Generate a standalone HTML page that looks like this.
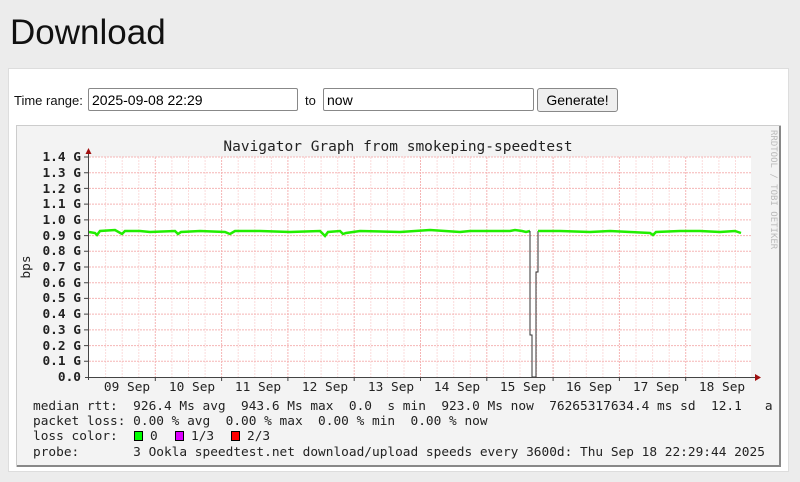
<!DOCTYPE html>
<html><head><meta charset="utf-8"><style>
body{margin:0;background:#ececec;width:800px;height:482px;overflow:hidden;position:relative;font-family:"Liberation Sans",sans-serif}
h1{position:absolute;left:10px;top:13px;margin:0;font-weight:normal;font-size:35px;color:#111}
.panel{position:absolute;left:8px;top:68px;width:781px;height:404px;background:#fff;border:1px solid #ddd;box-sizing:border-box}
.lbl{position:absolute;font-size:13px;color:#111}
.inp{position:absolute;height:23px;border:1px solid #888;border-radius:2px;box-sizing:border-box;font-size:14px;padding:2px 3px;line-height:18px;background:#fff}
.btn{position:absolute;left:537px;top:88px;width:81px;height:24px;border:1px solid #888;border-radius:3px;background:#efefef;box-sizing:border-box;font-size:14px;text-align:center;line-height:22px}
svg{position:absolute;left:16px;top:125px}
svg text{font-family:"DejaVu Sans Mono","Liberation Mono",monospace;font-size:12.8px;fill:#222}
</style></head><body>
<h1>Download</h1>
<div class="panel"></div>
<div class="lbl" style="left:14px;top:93px">Time range:</div>
<div class="inp" style="left:88px;top:88px;width:210px">2025-09-08 22:29</div>
<div class="lbl" style="left:305px;top:93px">to</div>
<div class="inp" style="left:323px;top:88px;width:211px">now</div>
<div class="btn">Generate!</div>
<svg width="765" height="342" viewBox="16 125 765 342">
<rect x="16.5" y="125.5" width="764" height="341" fill="#f3f3f3" stroke="#ccc"/>
<line x1="780" y1="126" x2="780" y2="467" stroke="#888" stroke-width="2"/>
<line x1="17" y1="466" x2="781" y2="466" stroke="#888" stroke-width="2"/>
<rect x="89" y="157" width="662" height="220" fill="#fff"/>
<g stroke="#fbdcdc" stroke-width="1" stroke-dasharray="2,1">
<path d="M105.6 157V377M122.2 157V377M138.8 157V377M171.9 157V377M188.5 157V377M205.1 157V377M238.2 157V377M254.8 157V377M271.4 157V377M304.5 157V377M321.1 157V377M337.7 157V377M370.8 157V377M387.4 157V377M404 157V377M437.1 157V377M453.7 157V377M470.3 157V377M503.4 157V377M520 157V377M536.6 157V377M569.7 157V377M586.3 157V377M602.9 157V377M636 157V377M652.6 157V377M669.2 157V377M702.3 157V377M718.9 157V377M735.5 157V377"/>
</g>
<g stroke="#f5b5b5" stroke-width="1" stroke-dasharray="2,1">
<path d="M89 361.3H751M89 345.6H751M89 329.9H751M89 314.1H751M89 298.4H751M89 282.7H751M89 267H751M89 251.3H751M89 235.6H751M89 219.9H751M89 204.1H751M89 188.4H751M89 172.7H751M89 157H751"/>
<path d="M155.3 157V377M221.6 157V377M287.9 157V377M354.2 157V377M420.5 157V377M486.8 157V377M553.1 157V377M619.4 157V377M685.7 157V377"/>
</g>
<polyline fill="none" stroke="#22ee00" stroke-width="2.5" points="89,232 95,233 97,235 100,231 115,230 122,234 125,231 140,231 150,232 175,231 178,234 181,232 200,231 225,232 230,234 235,231 260,231 290,232 320,231 325,236 328,232 340,231 343,234 346,233 360,231 400,232 430,230 460,232 470,231 490,231 510,231 515,230 522,231 526,232 530,231"/>
<polyline fill="none" stroke="#333" stroke-width="1" points="530,231 530,335 532,335 532,377 536,377 536,272 538,272 538,231"/>
<polyline fill="none" stroke="#22ee00" stroke-width="2.5" points="538,231 560,231 590,232 610,231 630,232 650,233 653,235 656,232 680,231 700,231 720,232 735,231 741,233"/>
<g stroke="#444" stroke-width="1">
<line x1="88.5" y1="150" x2="88.5" y2="380"/>
<line x1="85" y1="377.5" x2="756" y2="377.5"/>
<path d="M84 361.3h4M84 345.6h4M84 329.9h4M84 314.1h4M84 298.4h4M84 282.7h4M84 267h4M84 251.3h4M84 235.6h4M84 219.9h4M84 204.1h4M84 188.4h4M84 172.7h4M84 157h4M155.3 377v4M221.6 377v4M287.9 377v4M354.2 377v4M420.5 377v4M486.8 377v4M553.1 377v4M619.4 377v4M685.7 377v4"/>
</g>
<path d="M85.5 154 L88.5 148 L91.5 154Z M755 374 L761 377.5 L755 381Z" fill="#a01010"/>
<text x="398" y="151" text-anchor="middle" style="font-size:14.5px">Navigator Graph from smokeping-speedtest</text>
<g text-anchor="end" style="font-weight:bold;font-size:11.5px;fill:#444">
<text x="81" y="161">1.4 G</text><text x="81" y="177">1.3 G</text><text x="81" y="193">1.2 G</text><text x="81" y="208">1.1 G</text><text x="81" y="224">1.0 G</text><text x="81" y="240">0.9 G</text><text x="81" y="255">0.8 G</text><text x="81" y="271">0.7 G</text><text x="81" y="287">0.6 G</text><text x="81" y="302">0.5 G</text><text x="81" y="318">0.4 G</text><text x="81" y="334">0.3 G</text><text x="81" y="350">0.2 G</text><text x="81" y="365">0.1 G</text><text x="81" y="381">0.0</text>
</g>
<text transform="translate(30,267) rotate(-90)" text-anchor="middle">bps</text>
<text transform="translate(771,130) rotate(90)" style="font-size:9px;fill:#bbb">RRDTOOL / TOBI OETIKER</text>
<g text-anchor="middle" style="font-size:12px">
<text x="127" y="391">09 Sep</text><text x="192" y="391">10 Sep</text><text x="258" y="391">11 Sep</text><text x="325" y="391">12 Sep</text><text x="391" y="391">13 Sep</text><text x="457" y="391">14 Sep</text><text x="523" y="391">15 Sep</text><text x="589" y="391">16 Sep</text><text x="656" y="391">17 Sep</text><text x="722" y="391">18 Sep</text>
</g>
<text x="33" y="410" xml:space="preserve">median rtt:  926.4 Ms avg  943.6 Ms max  0.0  s min  923.0 Ms now  76265317634.4 ms sd  12.1   a</text>
<text x="33" y="425" xml:space="preserve">packet loss: 0.00 % avg  0.00 % max  0.00 % min  0.00 % now</text>
<text x="33" y="440" xml:space="preserve">loss color:</text>
<rect x="134.5" y="431.5" width="8" height="9" fill="#00ff00" stroke="#000"/><text x="150" y="440">0</text>
<rect x="175.5" y="431.5" width="8" height="9" fill="#dd00ff" stroke="#000"/><text x="191" y="440">1/3</text>
<rect x="231.5" y="431.5" width="8" height="9" fill="#ff0000" stroke="#000"/><text x="247" y="440">2/3</text>
<text x="33" y="456" xml:space="preserve">probe:       3 Ookla speedtest.net download/upload speeds every 3600d: Thu Sep 18 22:29:44 2025</text>
</svg>
</body></html>
